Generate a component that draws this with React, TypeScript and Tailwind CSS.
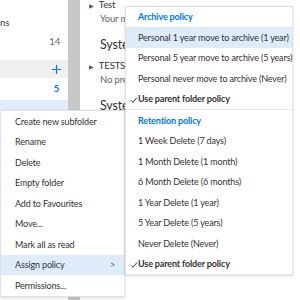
import React from "react";

const font = { fontFamily: 'Lato, "Liberation Sans", sans-serif' };

const contextItems = [
  "Create new subfolder",
  "Rename",
  "Delete",
  "Empty folder",
  "Add to Favourites",
  "Move...",
  "Mark all as read",
  "Assign policy",
  "Permissions...",
];

const archiveItems = [
  "Personal 1 year move to archive (1 year)",
  "Personal 5 year move to archive (5 years)",
  "Personal never move to archive (Never)",
];

const retentionItems = [
  "1 Week Delete (7 days)",
  "1 Month Delete (1 month)",
  "6 Month Delete (6 months)",
  "1 Year Delete (1 year)",
  "5 Year Delete (5 years)",
  "Never Delete (Never)",
];

function Check() {
  return (
    <svg width="8" height="8" viewBox="0 0 8 8" className="absolute left-[4px] top-[7px]">
      <path d="M1 4.3 L3 6.3 L7 1.5" fill="none" stroke="#333" strokeWidth="1" />
    </svg>
  );
}

function MessageRow({ children, date, className = "" }: { children: React.ReactNode; date?: string; className?: string }) {
  return (
    <div className={`flex items-center ${className}`}>
      <div className="w-[216px] flex items-center overflow-hidden">{children}</div>
      <div className="text-[9px] text-[#666]">{date}</div>
    </div>
  );
}

export default function App() {
  return (
    <div className="relative w-[300px] h-[300px] overflow-hidden bg-white text-[#333] whitespace-nowrap tracking-[-0.15px]" style={font}>
      <div className="flex h-full">
        {/* folder pane */}
        <div className="w-[68px] shrink-0 pt-[14px] text-[9.5px]">
          <div className="h-[18px] flex items-center">ns</div>
          <div className="h-[20px] flex items-center justify-end pr-[8px] text-[#666]">14</div>
          <div className="h-[8px]" />
          <div className="h-[18px] flex items-center justify-end pr-[7px] bg-[#f0f0f0]">
            <svg width="9" height="9" viewBox="0 0 9 9">
              <path d="M4.5 0 V9 M0 4.5 H9" stroke="#0078d7" strokeWidth="1.2" />
            </svg>
          </div>
          <div className="h-[22px] flex items-center justify-end pr-[9px] text-[#0078d7] font-bold">5</div>
          <div className="h-[40px] bg-[#deecf9]" />
        </div>
        <div className="w-[12px] shrink-0 bg-[#c8c8c8]" />
        {/* message list */}
        <div className="w-[245px] shrink-0 text-[9.5px]">
          <MessageRow date="24/05" className="h-[11px] pl-[9px]">
            <span className="text-[6px] text-[#555] mr-[5px]">▶</span>
            <span>Test</span>
          </MessageRow>
          <MessageRow date="1'." className="h-[17px] pl-[20px]">
            <span className="text-[#666]">Your message wasn't delivered</span>
          </MessageRow>
          <MessageRow className="h-[32px] pl-[20px] pt-[3px]">
            <span className="text-[12.5px] text-[#333]">System Administrator</span>
          </MessageRow>
          <MessageRow date="24," className="h-[13px] pl-[9px]">
            <span className="text-[6px] text-[#555] mr-[5px]">▶</span>
            <span>TESTS</span>
          </MessageRow>
          <MessageRow className="h-[14px] pl-[20px]">
            <span className="text-[#666]">No preview is available.</span>
          </MessageRow>
          <MessageRow date="24," className="h-[38px] pl-[20px] pt-[1px]">
            <span className="text-[12.5px] text-[#333]">System Administrator</span>
          </MessageRow>
        </div>
      </div>

      {/* context menu */}
      <div className="absolute left-0 top-[110px] w-[125px] bg-white border border-[#e1e1e1] shadow-[0_1px_3px_rgba(0,0,0,0.15)] text-[9px]">
        {contextItems.map((item) => (
          <div
            key={item}
            className={`h-[20.5px] flex items-center pl-[14px] pr-[9px] justify-between ${item === "Assign policy" ? "bg-[#deecf9]" : ""}`}
          >
            <span>{item}</span>
            {item === "Assign policy" && <span className="text-[9px] text-[#555]">&gt;</span>}
          </div>
        ))}
      </div>

      {/* policy submenu */}
      <div className="absolute left-[125px] top-[6px] w-[168px] bg-white border border-[#e1e1e1] shadow-[0_1px_3px_rgba(0,0,0,0.15)] text-[9px]">
        <div className="h-[20px] flex items-center pl-[12px] text-[#0078d7] font-bold">Archive policy</div>
        {archiveItems.map((item, i) => (
          <div key={item} className={`h-[20.5px] flex items-center pl-[12px] ${i === 0 ? "bg-[#deecf9]" : ""}`}>
            {item}
          </div>
        ))}
        <div className="relative h-[20.5px] flex items-center pl-[12px] font-bold">
          <Check />
          Use parent folder policy
        </div>
        <div className="h-px bg-[#e8e8e8]" />
        <div className="h-[20.5px] flex items-center pl-[12px] text-[#0078d7] font-bold">Retention policy</div>
        {retentionItems.map((item) => (
          <div key={item} className="h-[20.5px] flex items-center pl-[12px]">
            {item}
          </div>
        ))}
        <div className="relative h-[20.5px] flex items-center pl-[12px] font-bold">
          <Check />
          Use parent folder policy
        </div>
      </div>
    </div>
  );
}
